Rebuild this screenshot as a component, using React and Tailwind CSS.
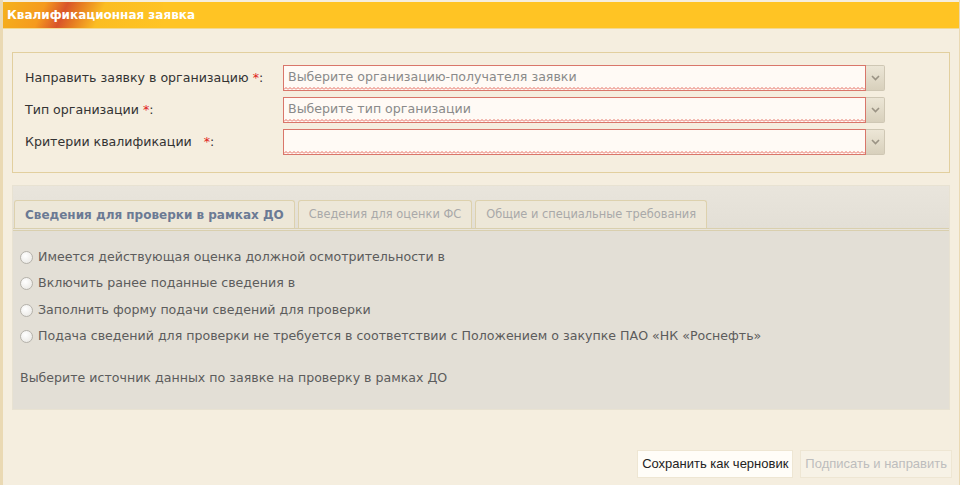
import { useState } from "react";

const FIELDS = [
  { label: "Направить заявку в организацию", gap: "", placeholder: "Выберите организацию-получателя заявки" },
  { label: "Тип организации", gap: "", placeholder: "Выберите тип организации" },
  { label: "Критерии квалификации", gap: "\u00a0\u00a0", placeholder: "" },
];

const TABS = [
  "Сведения для проверки в рамках ДО",
  "Сведения для оценки ФС",
  "Общие и специальные требования",
];

const OPTIONS = [
  "Имеется действующая оценка должной осмотрительности в",
  "Включить ранее поданные сведения в",
  "Заполнить форму подачи сведений для проверки",
  "Подача сведений для проверки не требуется в соответствии с Положением о закупке ПАО «НК «Роснефть»",
];

// wavy red underline of invalid fields
function Squiggle() {
  return (
    <svg className="absolute left-0 right-0 bottom-0 w-full h-[3px]">
      <defs>
        <pattern id="sq" width="4" height="3" patternUnits="userSpaceOnUse">
          <path d="M0 2.5 L2 0.5 L4 2.5" stroke="#e4685c" strokeWidth="1" fill="none" />
        </pattern>
      </defs>
      <rect width="100%" height="3" fill="url(#sq)" />
    </svg>
  );
}

function Combo({ placeholder }) {
  return (
    <div className="flex h-[26px] w-[602px]">
      <div className="relative flex-1 border border-[#d9766a] bg-[#fffaf5] px-[4px] pb-[2px] flex items-center text-[12.6px] text-[#8a8a8a]">
        {placeholder}
        <Squiggle />
      </div>
      <div className="w-[19px] border border-l-0 border-[#cfc7b4] rounded-r-[2px] bg-gradient-to-b from-[#ece6d6] to-[#d8d0bc] flex items-center justify-center">
        <svg width="9" height="6" viewBox="0 0 9 6">
          <path d="M1 1 L4.5 4.5 L8 1" stroke="#9a9384" strokeWidth="1.6" fill="none" />
        </svg>
      </div>
    </div>
  );
}

export default function App() {
  const [tab, setTab] = useState(0);
  const [choice, setChoice] = useState(null);

  return (
    <div className="w-[969px] h-[485px] bg-white font-['DejaVu_Sans',sans-serif] overflow-hidden">
      <div className="w-[960px] h-[485px] pt-[2px] flex flex-col bg-[#f5eedf] border-l-[3px] border-r border-[#ead9b3]">
        {/* header */}
        <div className="relative h-[27px] shrink-0 bg-[#ffc424] border-b border-[#f3d990] flex items-center overflow-hidden">
          <div className="absolute inset-y-0 left-0 w-[160px] bg-[linear-gradient(115deg,#f5b21c_0%,#f59a1e_25%,#d9542a_38%,#e67b22_46%,#fbbd22_60%,#ffc424_100%)]" />
          <span className="relative pl-[4px] text-[12px] font-bold text-white">
            Квалификационная заявка
          </span>
        </div>

        <div className="flex-1 flex flex-col px-[9px] pt-[23px]">
          {/* form */}
          <div className="border border-[#e2cf9e] bg-[#f5eedf] pl-[12px] pt-[12px] pb-[17px] flex flex-col gap-[6px]">
            {FIELDS.map((f) => (
              <div key={f.label} className="flex items-center">
                <div className="w-[258px] text-[12.6px] text-[#333]">
                  {f.label}
                  {f.gap} <span className="text-[#e02020]">*</span>:
                </div>
                <Combo placeholder={f.placeholder} />
              </div>
            ))}
          </div>

          {/* tabs */}
          <div className="mt-[12px] h-[225px] bg-[#e3dfd6] border border-[#e8e2d2] flex flex-col">
            <div className="bg-[linear-gradient(#e9e5dc,#e3dfd6)] pt-[14px] pl-[1px] flex gap-[3px] border-b-[3px] border-double border-[#d9cfae]">
              {TABS.map((t, i) => (
                <button
                  key={t}
                  onClick={() => setTab(i)}
                  className={
                    "h-[28px] rounded-t-[3px] border border-b-0 border-[#ddd1ad] bg-[#ede7d8] " +
                    (tab === i ? "px-[10px] text-[12px] font-bold text-[#6b7a94]" : "px-[10px] text-[11.4px] text-[#a9a9a9]")
                  }
                >
                  {t}
                </button>
              ))}
            </div>
            <div className="pl-[7px] pt-[13px] flex flex-col text-[12.6px] text-[#5c5c5c]">
              {OPTIONS.map((o, i) => (
                <label key={o} className="h-[26.5px] flex items-center gap-[5px] cursor-pointer">
                  <span
                    onClick={() => setChoice(i)}
                    className="w-[13px] h-[13px] rounded-full border border-[#b5b2ab] bg-[radial-gradient(circle_at_40%_35%,#ffffff,#e6e4df)] flex items-center justify-center"
                  >
                    {choice === i && <span className="w-[5px] h-[5px] rounded-full bg-[#555]" />}
                  </span>
                  {o}
                </label>
              ))}
              <div className="mt-[19px]">Выберите источник данных по заявке на проверку в рамках ДО</div>
            </div>
          </div>

          {/* buttons */}
          <div className="mt-[40px] -mr-[2px] flex justify-end gap-[7px] font-['Liberation_Sans',sans-serif] text-[13px]">
            <button className="h-[28px] px-[4px] border border-[#eee6d3] bg-[#fffdf8] text-[#222]">
              Сохранить как черновик
            </button>
            <button className="h-[28px] px-[4px] border border-[#eee6d3] bg-[#f7f2e6] text-[#bdbdbd]">
              Подписать и направить
            </button>
          </div>
        </div>
      </div>
    </div>
  );
}
